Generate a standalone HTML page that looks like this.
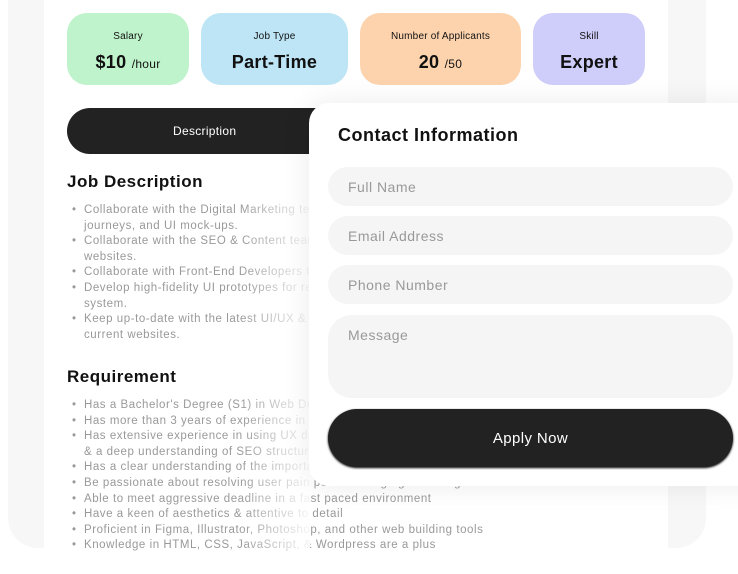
<!DOCTYPE html>
<html><head><meta charset="utf-8"><style>
*{margin:0;padding:0;box-sizing:border-box}
body{width:738px;height:574px;background:#fff;font-family:"Liberation Sans",sans-serif;position:relative;overflow:hidden}
.a{position:absolute}
.outer{left:8px;top:-30px;width:698px;height:578px;background:#f7f7f7;border-radius:30px}
.inner{left:44px;top:0;width:624px;height:548px;background:#fff}
.stat{position:absolute;top:13px;height:72px;border-radius:20px;text-align:center;color:#111}
.stat .l{font-size:10px;margin-top:18px;letter-spacing:.2px}
.stat .v{font-size:18px;font-weight:bold;margin-top:10px;letter-spacing:.3px}
.stat .v small{font-size:12px;font-weight:normal}
.tab{left:67px;top:108px;width:280px;height:46px;background:#222;border-radius:23px;color:#fff;font-size:12px;line-height:46px;padding-left:106px;letter-spacing:.3px}
h2{position:absolute;font-size:17px;font-weight:bold;color:#111;letter-spacing:.5px}
ul{position:absolute;left:72px;list-style:none;font-size:11.5px;color:#999;line-height:15.6px;white-space:nowrap;letter-spacing:.55px}
li{padding-left:12px;position:relative}
li.b:before{content:"•";position:absolute;left:0}
.card{left:309px;top:103px;width:460px;height:383px;background:#fff;border-radius:20px;box-shadow:0 0 30px rgba(0,0,0,.08)}
.inp{position:absolute;left:328px;width:405px;height:39px;background:#f5f5f5;border-radius:20px;font-size:14px;color:#999;padding-left:20px;line-height:41px;letter-spacing:.5px}
.btn{left:328px;top:409px;width:405px;height:58px;background:#222;border-radius:29px;color:#fff;font-size:15px;text-align:center;line-height:60px;box-shadow:0 1px 2px #000;letter-spacing:.4px}
.fade{left:240px;top:160px;width:70px;height:390px;background:linear-gradient(90deg,rgba(255,255,255,0),rgba(255,255,255,.9))}
</style></head><body>
<div class="a outer"></div>
<div class="a inner"></div>
<div class="stat" style="left:67px;width:122px;background:#bff3cb"><div class="l">Salary</div><div class="v">$10 <small>/hour</small></div></div>
<div class="stat" style="left:201px;width:147px;background:#bde5f5"><div class="l">Job Type</div><div class="v">Part-Time</div></div>
<div class="stat" style="left:360px;width:161px;background:#fdd3ad"><div class="l">Number of Applicants</div><div class="v">20 <small>/50</small></div></div>
<div class="stat" style="left:533px;width:112px;background:#cfcdfa"><div class="l">Skill</div><div class="v">Expert</div></div>
<div class="a tab">Description</div>
<h2 style="left:67px;top:172px">Job Description</h2>
<ul style="top:203px">
<li class="b">Collaborate with the Digital Marketing team</li><li>journeys, and UI mock-ups.</li>
<li class="b">Collaborate with the SEO &amp; Content team</li><li>websites.</li>
<li class="b">Collaborate with Front-End Developers to</li>
<li class="b">Develop high-fidelity UI prototypes for re</li><li>system.</li>
<li class="b">Keep up-to-date with the latest UI/UX &amp;</li><li>current websites.</li>
</ul>
<h2 style="left:67px;top:367px">Requirement</h2>
<ul style="top:398px">
<li class="b">Has a Bachelor's Degree (S1) in Web Design</li>
<li class="b">Has more than 3 years of experience in</li>
<li class="b">Has extensive experience in using UX design</li><li>&amp; a deep understanding of SEO structure</li>
<li class="b">Has a clear understanding of the importance</li>
<li class="b">Be passionate about resolving user pain points through great design</li>
<li class="b">Able to meet aggressive deadline in a fast paced environment</li>
<li class="b">Have a keen of aesthetics &amp; attentive to detail</li>
<li class="b">Proficient in Figma, Illustrator, Photoshop, and other web building tools</li>
<li class="b">Knowledge in HTML, CSS, JavaScript, &amp; Wordpress are a plus</li>
</ul>
<div class="a fade"></div>
<div class="a card"></div>
<h2 style="left:338px;top:125px;font-size:18px">Contact Information</h2>
<div class="inp" style="top:167px">Full Name</div>
<div class="inp" style="top:216px">Email Address</div>
<div class="inp" style="top:265px">Phone Number</div>
<div class="inp" style="top:315px;height:83px;border-radius:24px">Message</div>
<div class="a btn">Apply Now</div>
</body></html>
